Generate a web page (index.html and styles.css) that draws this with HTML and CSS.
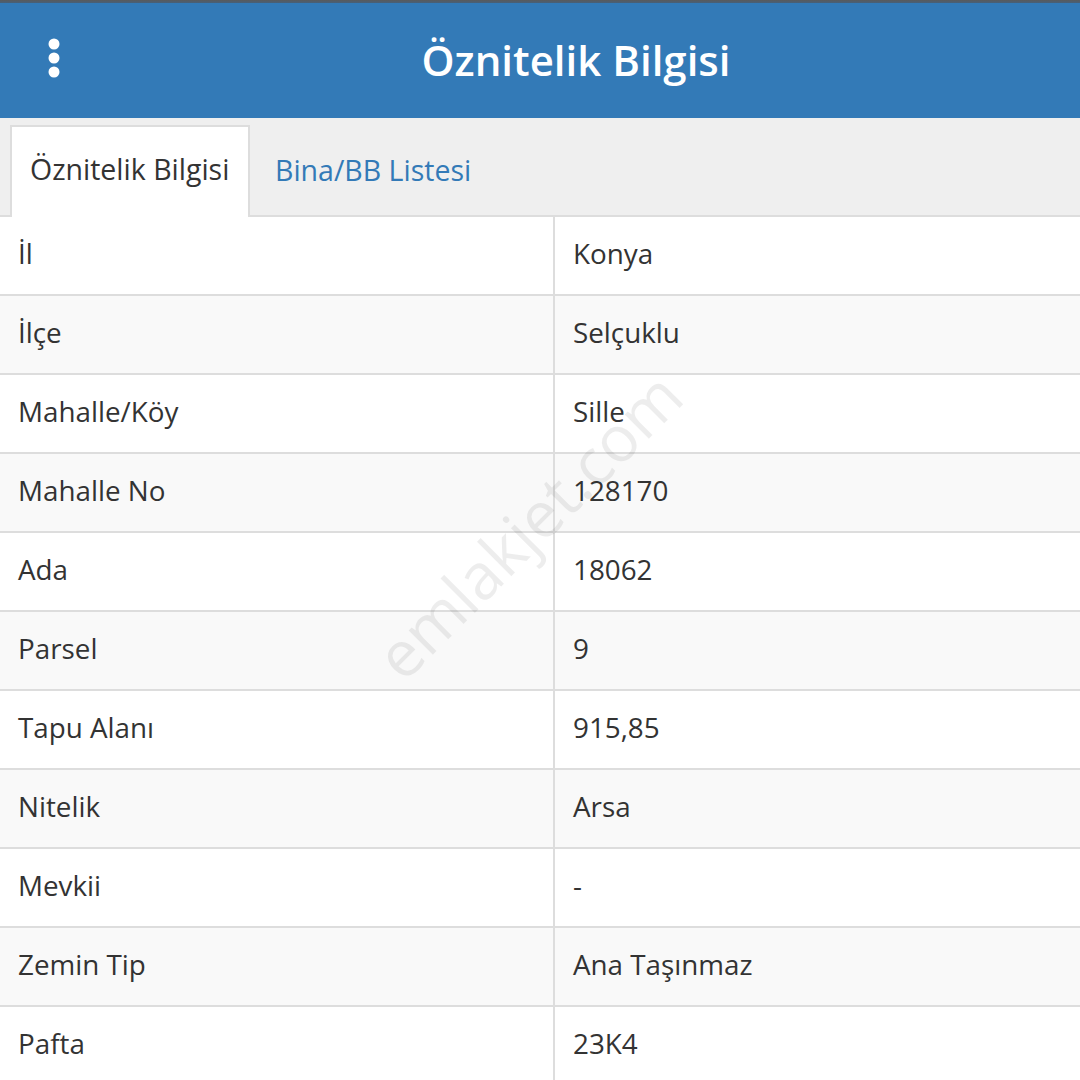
FILE: index.html
```html
<!DOCTYPE html>
<html lang="tr">
<head>
<meta charset="utf-8">
<link rel="stylesheet" href="styles.css">
</head>
<body>
<div class="topstrip"></div>
<header class="appbar">
  <div class="menu">
    <svg width="14" height="42" viewBox="0 0 14 42"><circle cx="7" cy="7" r="5.5" fill="#fff"/><circle cx="7" cy="21" r="5.5" fill="#fff"/><circle cx="7" cy="35" r="5.5" fill="#fff"/></svg>
  </div>
  <h1 class="title">Öznitelik Bilgisi</h1>
</header>
<nav class="tabs">
  <div class="tab active">Öznitelik Bilgisi</div>
  <div class="tab">Bina/BB Listesi</div>
</nav>
<main class="content">
  <div class="table">
    <div class="row"><div class="cell key">İl</div><div class="cell val">Konya</div></div>
    <div class="row"><div class="cell key">İlçe</div><div class="cell val">Selçuklu</div></div>
    <div class="row"><div class="cell key">Mahalle/Köy</div><div class="cell val">Sille</div></div>
    <div class="row"><div class="cell key">Mahalle No</div><div class="cell val">128170</div></div>
    <div class="row"><div class="cell key">Ada</div><div class="cell val">18062</div></div>
    <div class="row"><div class="cell key">Parsel</div><div class="cell val">9</div></div>
    <div class="row"><div class="cell key">Tapu Alanı</div><div class="cell val">915,85</div></div>
    <div class="row"><div class="cell key">Nitelik</div><div class="cell val">Arsa</div></div>
    <div class="row"><div class="cell key">Mevkii</div><div class="cell val">-</div></div>
    <div class="row"><div class="cell key">Zemin Tip</div><div class="cell val">Ana Taşınmaz</div></div>
    <div class="row"><div class="cell key">Pafta</div><div class="cell val">23K4</div></div>
  </div>
  <div class="watermark">emlakjet.com</div>
</main>
</body>
</html>
```
FILE: styles.css
```css
* { box-sizing: border-box; }
html, body {
  margin: 0;
  padding: 0;
  width: 1080px;
  height: 1080px;
  overflow: hidden;
  background: #fff;
  font-family: "Open Sans", "Liberation Sans", sans-serif;
  color: #333;
}
.topstrip {
  height: 3px;
  background: linear-gradient(#5a5a5a, #46607a);
}
.appbar {
  height: 115px;
  background: #337ab7;
  display: flex;
  align-items: center;
}
.menu {
  width: 108px;
  display: flex;
  justify-content: center;
  align-items: center;
  padding-bottom: 5px;
}
.menu svg { display: block; }
.title {
  flex: 1;
  margin: 0;
  padding-right: 36px;
  text-align: center;
  color: #fff;
  font-size: 42px;
  font-weight: 600;
  line-height: 1;
  padding-bottom: 2px;
}
.tabs {
  height: 99px;
  background: #efefef;
  border-bottom: 2px solid #dddddd;
  display: flex;
  align-items: flex-end;
  padding-left: 10px;
}
.tab {
  height: 88px;
  padding: 0 20px 6px 20px;
  display: flex;
  align-items: center;
  font-size: 28.5px;
  color: #337ab7;
  margin-bottom: -2px;
  white-space: nowrap;
  flex-shrink: 0;
}
.tab.active {
  background: #fff;
  color: #333;
  border: 2px solid #dddddd;
  border-bottom: none;
  height: 92px;
  padding-left: 18px;
  padding-right: 0;
  width: 240px;
}
.tab + .tab { padding-left: 25px; }
.content {
  position: relative;
}
.table {
  display: flex;
  flex-direction: column;
}
.row {
  display: grid;
  grid-template-columns: 555px 1fr;
  height: 79px;
  border-bottom: 2px solid #dddddd;
}
.row:nth-child(even) { background: #f9f9f9; }
.cell {
  display: flex;
  align-items: center;
  font-size: 27.8px;
  color: #333;
  padding-bottom: 5px;
}
.key {
  padding-left: 18px;
  border-right: 2px solid #dddddd;
}
.val {
  padding-left: 18px;
}
.watermark {
  position: absolute;
  left: 528px;
  top: 308px;
  transform: translate(-50%, -50%) rotate(-45deg);
  font-size: 64px;
  color: rgba(0, 0, 0, 0.07);
  white-space: nowrap;
  pointer-events: none;
}
```
